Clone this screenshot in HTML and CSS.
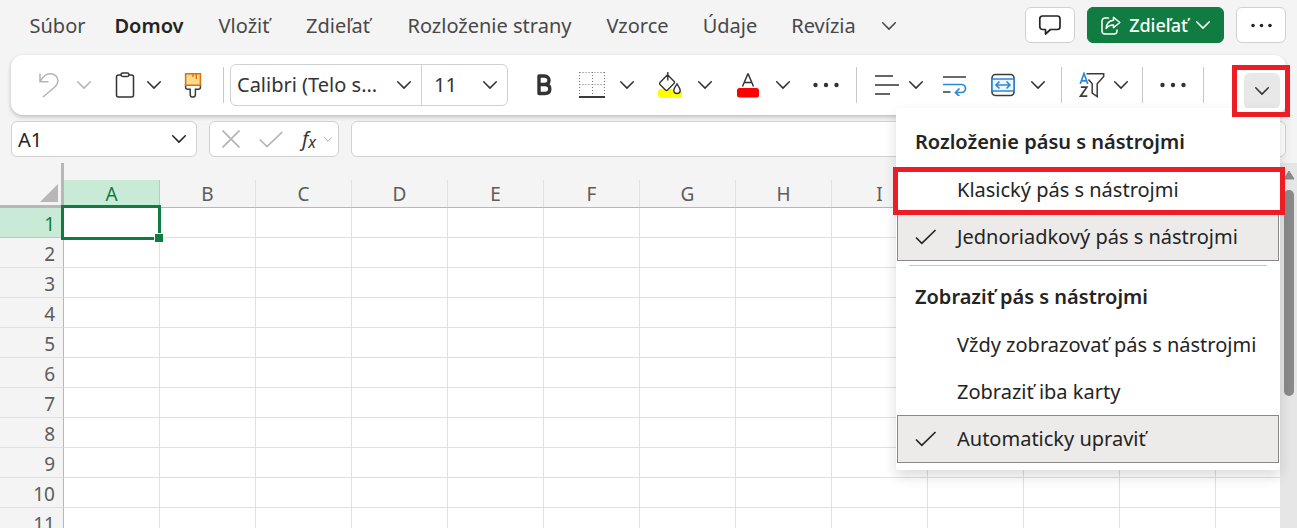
FILE: index.html
```html
<!DOCTYPE html>
<html lang="sk">
<head>
<meta charset="utf-8">
<title>Excel</title>
<link rel="stylesheet" href="styles.css">
</head>
<body>
<svg class="defs" aria-hidden="true">
  <symbol id="chev" viewBox="0 0 14 8"><path d="M.7.8 7 7.1 13.3.8" fill="none" stroke="currentColor" stroke-width="1.5" stroke-linecap="round" stroke-linejoin="round"/></symbol>
  <symbol id="dots" viewBox="0 0 26 6"><g fill="currentColor"><circle cx="2.5" cy="3" r="2.2"/><circle cx="13" cy="3" r="2.2"/><circle cx="23.500" cy="3" r="2.2"/></g></symbol>
  <symbol id="tick" viewBox="0 0 22 16"><path d="M1 8.500 6.800 14.300 20.500 1" fill="none" stroke="currentColor" stroke-width="1.700"/></symbol>
</svg>

<header class="topbar">
  <nav class="tabs">
    <button class="tab">Súbor</button>
    <button class="tab tab-active">Domov</button>
    <button class="tab">Vložiť</button>
    <button class="tab">Zdieľať</button>
    <button class="tab">Rozloženie strany</button>
    <button class="tab">Vzorce</button>
    <button class="tab">Údaje</button>
    <button class="tab">Revízia</button>
    <button class="tab" aria-label="Ďalšie karty"><svg class="chev"><use href="#chev"/></svg></button>
  </nav>
  <div class="actions">
    <button class="action" aria-label="Komentáre">
      <svg width="24" height="22" viewBox="0 0 24 22" fill="none" stroke="currentColor" stroke-width="1.7" stroke-linejoin="round"><path d="M4.500 2h14.800a2.700 2.700 0 0 1 2.700 2.700v8.100a2.700 2.700 0 0 1-2.700 2.700h-6.800L7.500 20v-4.500h-3a2.700 2.700 0 0 1-2.700-2.700V4.700A2.700 2.700 0 0 1 4.500 2z"/></svg>
    </button>
    <button class="action share">
      <svg width="20" height="19" viewBox="0 0 20 19" fill="none" stroke="currentColor" stroke-width="1.500" stroke-linejoin="round" stroke-linecap="round"><path d="M7.500 2H4a3 3 0 0 0-3 3v10a3 3 0 0 0 3 3h9a3 3 0 0 0 3-3v-1"/><path d="M12.500 1.200 18.800 6.500l-6.300 5.300V8.900c-3.500-.1-5.500 1-7.300 3.600.3-4.400 2.700-7.800 7.300-8.200z"/></svg>
      <span>Zdieľať</span>
      <svg class="chev"><use href="#chev"/></svg>
    </button>
    <button class="action" aria-label="Viac"><svg width="21" height="5"><use href="#dots"/></svg></button>
  </div>
</header>

<section class="ribbon" aria-label="Pás s nástrojmi">
  <button class="tool muted" aria-label="Späť"><svg width="22" height="26" viewBox="0 0 22 26" fill="none" stroke="currentColor" stroke-width="1.500"><path d="M2 1.500v8.200h8.500M2.300 9.400C4.500 5 8 2 12 1.800c4.500-.2 8 3 8 6.700 0 3-1.300 4.600-3.500 6.800L5 25"/></svg></button>
  <button class="drop muted" aria-label="Možnosti späť"><svg class="chev"><use href="#chev"/></svg></button>

  <button class="tool narrow gap-12" aria-label="Prilepiť"><svg width="20" height="26" viewBox="0 0 20 26" fill="none" stroke="currentColor" stroke-width="1.500"><rect x="1.500" y="3" width="17" height="22" rx="2"/><rect x="6" y="1" width="8" height="3.500" rx="1.700" fill="#fff"/></svg></button>
  <button class="drop" aria-label="Možnosti prilepenia"><svg class="chev"><use href="#chev"/></svg></button>
  <button class="tool gap-4" aria-label="Kopírovať formát"><svg width="18" height="26" viewBox="0 0 18 26" fill="none"><path d="M1.600 12v3.300a2 2 0 0 0 2 2H6.200v5.200a2.600 2.600 0 0 0 5.200 0v-5.200H14.400a2 2 0 0 0 2-2V12" stroke="#3b3b3b" stroke-width="1.500"/><path d="M1.600 1.700h14.800v11.600H1.600z" fill="#f8db8f" stroke="#e07000" stroke-width="1.500"/><path d="M9 2v3M12.300 2v5" stroke="#e07000" stroke-width="1.400"/></svg></button>

  <span class="sep gap-10"></span>

  <div class="fields gap-6">
    <div class="field field-font">
      <select aria-label="Písmo"><option>Calibri (Telo s...</option></select>
      <svg class="chev"><use href="#chev"/></svg>
    </div>
    <div class="field field-size">
      <select aria-label="Veľkosť písma"><option>11</option></select>
      <svg class="chev"><use href="#chev"/></svg>
    </div>
  </div>

  <button class="tool gap-16" aria-label="Tučné"><svg width="16" height="22" viewBox="0 0 16 22" fill="none" stroke="currentColor" stroke-width="3.400" stroke-linejoin="round"><path d="M3 2h5.300c3 0 4.700 1.700 4.700 4.300S11.300 10.500 8.300 10.500H3zM3 10.500h5.800c3.200 0 5 1.700 5 4.500s-1.800 4.500-5 4.500H3z"/></svg></button>
  <button class="tool gap-8" aria-label="Orámovanie"><svg width="26" height="28" viewBox="0 0 26 28" fill="none" stroke="#777" stroke-width="1" stroke-dasharray="1 2"><path d="M.5 1.500h25M.5 13.500h25M.5 1v24M13.500 1v24M25.500 1v24"/><path d="M0 26h26" stroke="#3b3b3b" stroke-width="2" stroke-dasharray="none"/></svg></button>
  <button class="drop" aria-label="Typy orámovania"><svg class="chev"><use href="#chev"/></svg></button>
  <button class="tool gap-8" aria-label="Farba výplne"><svg width="26" height="28" viewBox="0 0 26 28" fill="none" stroke="currentColor" stroke-width="1.400"><rect x="1" y="18" width="24" height="9" rx="3" fill="#ff0" stroke="none"/><path d="M10.300 4 3 11.500a1.400 1.400 0 0 0 0 2l5.500 5.600a1.400 1.400 0 0 0 2 0L17 12.500c.9-.9.900-1.300.2-2.100L10.800 4M10.800 1v8.500" fill="#fff"/><path d="M20 13c1.500 2.200 3.200 4.200 3.200 6.300a3.200 3.200 0 0 1-6.400 0c0-2.100 1.700-4.100 3.200-6.300z" fill="#fff"/></svg></button>
  <button class="drop" aria-label="Farby výplne"><svg class="chev"><use href="#chev"/></svg></button>
  <button class="tool gap-8" aria-label="Farba písma"><svg width="22" height="26" viewBox="0 0 22 26" fill="none" stroke="currentColor" stroke-width="1.500"><path d="M5.500 14.500 10.800 2h.4l5.300 12.500M7.300 10.500h7.400"/><rect y="16" width="22" height="9.500" rx="2.500" fill="red" stroke="none"/></svg></button>
  <button class="drop" aria-label="Farby písma"><svg class="chev"><use href="#chev"/></svg></button>
  <button class="tool gap-8" aria-label="Viac možností písma"><svg width="26" height="6"><use href="#dots"/></svg></button>

  <span class="sep gap-10"></span>

  <button class="tool narrow gap-16" aria-label="Zarovnanie"><svg width="24" height="22" viewBox="0 0 24 22" stroke="currentColor" stroke-width="1.600"><path d="M0 2h18M0 11h24M0 20h15"/></svg></button>
  <button class="drop" aria-label="Možnosti zarovnania"><svg class="chev"><use href="#chev"/></svg></button>
  <button class="tool gap-4" aria-label="Zalomiť text"><svg width="26" height="22" viewBox="0 0 26 22" fill="none" stroke="#3b3b3b" stroke-width="1.700"><path d="M1 3h23M1 18h7.500"/><path d="M1 10.500h18.500a3.700 3.700 0 0 1 0 8H13.500M17.500 14.500l-4 4 4 4" stroke="#2b88d8"/></svg></button>
  <button class="tool gap-8" aria-label="Zlúčiť a centrovať"><svg width="24" height="24" viewBox="0 0 24 24" fill="none" stroke="#3b3b3b" stroke-width="1.600"><rect x="1" y="1.500" width="22" height="21" rx="3.500"/><path d="M1 6h22v12H1z" fill="#eef6fc" stroke="#2b88d8"/><path d="M5 12h14M8.500 8.500 5 12l3.500 3.500M15.500 8.500 19 12l-3.500 3.500" stroke="#2b88d8"/></svg></button>
  <button class="drop" aria-label="Možnosti zlúčenia"><svg class="chev"><use href="#chev"/></svg></button>

  <span class="sep gap-8"></span>

  <button class="tool narrow gap-16" aria-label="Zoradiť a filtrovať"><svg width="26" height="26" viewBox="0 0 26 26" fill="none" stroke="#3b3b3b" stroke-width="1.500"><path d="M1.200 12 5 1.500 8.800 12M2.300 8.800h5.400" stroke="#2b88d8" stroke-width="1.700"/><path d="M1.800 15.200h6L1.500 24.200h6.800" stroke-width="1.700"/><path d="M7.500 1.800h17.200v2.600l-6.500 7.300V24.500l-5-3.500v-9.300L9.500 7.500"/></svg></button>
  <button class="drop" aria-label="Možnosti zoradenia"><svg class="chev"><use href="#chev"/></svg></button>

  <span class="sep gap-6"></span>
  <button class="tool gap-10" aria-label="Ďalšie príkazy"><svg width="26" height="6"><use href="#dots"/></svg></button>
  <span class="sep gap-10"></span>

  <button class="expand" aria-label="Možnosti pása s nástrojmi" aria-expanded="true"><svg class="chev"><use href="#chev"/></svg></button>

  <div class="menu" role="menu">
    <h2>Rozloženie pásu s nástrojmi</h2>
    <button class="item marked" role="menuitemradio" aria-checked="false">Klasický pás s nástrojmi</button>
    <button class="item checked" role="menuitemradio" aria-checked="true"><svg width="22" height="16"><use href="#tick"/></svg>Jednoriadkový pás s nástrojmi</button>
    <hr>
    <h2>Zobraziť pás s nástrojmi</h2>
    <button class="item" role="menuitemradio" aria-checked="false">Vždy zobrazovať pás s nástrojmi</button>
    <button class="item" role="menuitemradio" aria-checked="false">Zobraziť iba karty</button>
    <button class="item checked" role="menuitemradio" aria-checked="true"><svg width="22" height="16"><use href="#tick"/></svg>Automaticky upraviť</button>
  </div>
</section>

<div class="formula-row">
  <div class="namebox">
    <input type="text" value="A1" aria-label="Pole názvov">
    <button aria-label="Zoznam názvov"><svg class="chev"><use href="#chev"/></svg></button>
  </div>
  <div class="entry">
    <button aria-label="Zrušiť"><svg width="18" height="18" viewBox="0 0 18 18" stroke="#b5b5b5" stroke-width="1.700"><path d="M.5.5l17 17M17.500.5l-17 17"/></svg></button>
    <button aria-label="Zadať"><svg width="24" height="17" viewBox="0 0 24 17" fill="none" stroke="#b5b5b5" stroke-width="1.700"><path d="M.8 8.500 8 15.500 23.300 1"/></svg></button>
    <button class="fx" aria-label="Vložiť funkciu"><i>f</i><i class="fx-x">x</i><svg width="8" height="5"><use href="#chev"/></svg></button>
  </div>
  <input class="formula" type="text" aria-label="Riadok vzorcov">
</div>

<main class="sheet">
  <div class="cells">
    <table>
      <colgroup><col class="col-head"><col span="13" class="col-data"></colgroup>
      <thead><tr>
        <th class="corner"><svg width="18" height="18" viewBox="0 0 18 18"><path d="M18 0v18H0z" fill="#b7b7b7"/></svg></th>
        <th class="current"><span>A</span></th><th><span>B</span></th><th><span>C</span></th><th><span>D</span></th><th><span>E</span></th><th><span>F</span></th><th><span>G</span></th><th><span>H</span></th><th><span>I</span></th><th><span></span></th><th><span></span></th><th><span></span></th><th><span></span></th>
      </tr></thead>
      <tbody>
        <tr><th class="current">1</th><td class="selected"></td><td></td><td></td><td></td><td></td><td></td><td></td><td></td><td></td><td></td><td></td><td></td><td></td></tr>
        <tr><th>2</th><td></td><td></td><td></td><td></td><td></td><td></td><td></td><td></td><td></td><td></td><td></td><td></td><td></td></tr>
        <tr><th>3</th><td></td><td></td><td></td><td></td><td></td><td></td><td></td><td></td><td></td><td></td><td></td><td></td><td></td></tr>
        <tr><th>4</th><td></td><td></td><td></td><td></td><td></td><td></td><td></td><td></td><td></td><td></td><td></td><td></td><td></td></tr>
        <tr><th>5</th><td></td><td></td><td></td><td></td><td></td><td></td><td></td><td></td><td></td><td></td><td></td><td></td><td></td></tr>
        <tr><th>6</th><td></td><td></td><td></td><td></td><td></td><td></td><td></td><td></td><td></td><td></td><td></td><td></td><td></td></tr>
        <tr><th>7</th><td></td><td></td><td></td><td></td><td></td><td></td><td></td><td></td><td></td><td></td><td></td><td></td><td></td></tr>
        <tr><th>8</th><td></td><td></td><td></td><td></td><td></td><td></td><td></td><td></td><td></td><td></td><td></td><td></td><td></td></tr>
        <tr><th>9</th><td></td><td></td><td></td><td></td><td></td><td></td><td></td><td></td><td></td><td></td><td></td><td></td><td></td></tr>
        <tr><th>10</th><td></td><td></td><td></td><td></td><td></td><td></td><td></td><td></td><td></td><td></td><td></td><td></td><td></td></tr>
        <tr><th>11</th><td></td><td></td><td></td><td></td><td></td><td></td><td></td><td></td><td></td><td></td><td></td><td></td><td></td></tr>
      </tbody>
    </table>
  </div>
  <div class="scrollbar">
    <svg width="12" height="10" viewBox="0 0 12 10"><path d="M6 1 11 9H1z" fill="#8a8a8a" stroke="#8a8a8a" stroke-linejoin="round"/></svg>
    <div class="thumb"></div>
  </div>
</main>
</body>
</html>
```
FILE: styles.css
```css
* { box-sizing: border-box; }

body {
  margin: 0;
  height: 100vh;
  display: flex;
  flex-direction: column;
  overflow: hidden;
  background: #f4f4f4;
  color: #242424;
  font: 20px/28px "Noto Sans", "Open Sans", sans-serif;
}

button, input, select {
  margin: 0;
  padding: 0;
  border: 0;
  background: none;
  color: inherit;
  font: inherit;
}

.defs { position: absolute; width: 0; height: 0; }
svg { display: block; flex: none; }
.chev { width: 14px; height: 8px; }

/* Tabs and actions */
.topbar {
  flex: none;
  height: 55px;
  padding: 7px 11px 0 15px;
  display: flex;
  justify-content: space-between;
  align-items: flex-start;
}
.tabs {
  display: grid;
  grid-template-columns: 85px 98px 92px 96px 207px 89px 96px 91px 40px;
  height: 38px;
}
.tab {
  display: flex;
  align-items: center;
  justify-content: center;
  color: #484848;
  white-space: nowrap;
}
.tab-active { color: #242424; font-weight: 600; }
.actions { display: flex; gap: 12px; }
.action {
  width: 50px;
  height: 36px;
  display: flex;
  align-items: center;
  justify-content: center;
  background: #fff;
  border: 1px solid #d1d1d1;
  border-radius: 6px;
}
.share {
  width: 137px;
  gap: 8px;
  background: #107c41;
  border-color: #107c41;
  color: #fff;
  font-size: 18px;
  font-weight: 500;
}

/* Ribbon */
.ribbon {
  position: relative;
  z-index: 2;
  flex: none;
  height: 60px;
  margin: 0 11px;
  padding: 0 6px 0 18px;
  display: flex;
  align-items: center;
  background: #fff;
  border-radius: 12px;
  box-shadow: 0 2px 4px rgba(0, 0, 0, .22);
  color: #333;
}
.tool, .drop {
  flex: none;
  height: 36px;
  display: flex;
  align-items: center;
  justify-content: center;
}
.tool { width: 40px; }
.narrow { width: 28px; }
.drop { width: 30px; }
.muted { color: #b5b5b5; }
.gap-4 { margin-left: 4px; }
.gap-6 { margin-left: 6px; }
.gap-8 { margin-left: 8px; }
.gap-10 { margin-left: 10px; }
.gap-12 { margin-left: 12px; }
.gap-16 { margin-left: 16px; }
.sep { flex: none; width: 1px; height: 36px; background: #c8c8c8; }
.fields {
  flex: none;
  display: flex;
  height: 42px;
  border: 1px solid #d1d1d1;
  border-radius: 6px;
}
.field { display: grid; align-items: center; }
.field > * { grid-area: 1 / 1; }
.field select {
  width: 100%;
  height: 40px;
  appearance: none;
}
.field .chev { justify-self: end; margin-right: 10px; pointer-events: none; }
.field-font { width: 190px; }
.field-font select { padding-left: 6px; }
.field-size { width: 86px; border-left: 1px solid #d1d1d1; }
.field-size select { padding-left: 12px; }
.expand {
  position: relative;
  flex: none;
  width: 36px;
  height: 36px;
  margin: 12px 0 0 auto;
  display: grid;
  place-items: center;
  background: #e8e8e8;
  border-radius: 6px;
}
.expand::after {
  content: "";
  position: absolute;
  inset: -8px -10px -8px -12px;
  border: 5px solid #ee1c24;
  z-index: 1;
}

/* Drop-down menu */
.menu {
  position: absolute;
  top: 53px;
  right: 6px;
  width: 384px;
  padding: 10px 1px 7px;
  background: #fff;
  border-radius: 3px;
  box-shadow: 0 6px 14px rgba(0, 0, 0, .14);
  color: #242424;
}
.menu h2 {
  margin: 0;
  padding-left: 18px;
  font-size: 20px;
  font-weight: 600;
  line-height: 48px;
}
.item {
  position: relative;
  width: 100%;
  height: 47px;
  padding-left: 60px;
  display: flex;
  align-items: center;
  white-space: nowrap;
}
.checked {
  height: 48px;
  padding-left: 17px;
  gap: 20px;
  background: #edebe9;
  border: 1px solid #8a8886;
}
.marked::after {
  content: "";
  position: absolute;
  inset: 1px -6px -2px -4px;
  border: 5px solid #ee1c24;
  z-index: 1;
}
.menu hr {
  height: 1px;
  margin: 4px 12px 7px;
  border: 0;
  background: #c8c6c4;
}

/* Name box and formula bar */
.formula-row {
  flex: none;
  height: 48px;
  padding: 6px 11px;
  display: flex;
  gap: 12px;
}
.namebox, .entry, .formula {
  height: 36px;
  background: #fff;
  border: 1px solid #d1d1d1;
  border-radius: 6px;
}
.namebox { flex: none; width: 186px; display: flex; }
.namebox input { flex: 1; min-width: 0; padding: 2px 0 0 6px; }
.namebox button { width: 34px; display: grid; place-items: center; }
.entry {
  flex: none;
  width: 130px;
  padding: 0 6px 0 12px;
  display: flex;
  align-items: center;
  justify-content: space-between;
}
.fx { display: flex; align-items: center; color: #333; }
.fx-x { font-size: 16px; padding-top: 6px; }
.fx svg { margin-left: 8px; color: #999; }
.formula { flex: 1; min-width: 0; padding: 0 8px; }

/* Sheet */
.sheet { flex: 1; min-height: 0; display: flex; }
.cells { flex: 1; min-width: 0; overflow: hidden; background: #fff; }
table {
  width: 1312px;
  table-layout: fixed;
  border-collapse: separate;
  border-spacing: 0;
  font-size: 19px;
  color: #5c5c5c;
}
.col-head { width: 64px; }
.col-data { width: 96px; }
th, td { padding: 0; font-weight: 400; height: 30px; }
td { border-right: 1px solid #e0e0e0; border-bottom: 1px solid #e0e0e0; }
thead th {
  height: 45px;
  vertical-align: bottom;
  background: #f4f4f4;
  border-bottom: 1px solid #b7b7b7;
}
thead span {
  display: block;
  height: 27px;
  line-height: 28px;
  border-right: 1px solid #e0e0e0;
}
thead .corner { border-right: 3px solid #b7b7b7; border-bottom: 3px solid #b7b7b7; }
.corner svg { margin: 0 3px 3px auto; }
tbody th {
  padding: 3px 8px 0 0;
  text-align: right;
  line-height: 26px;
  background: #f4f4f4;
  border-right: 1px solid #b7b7b7;
  border-bottom: 1px solid #e0e0e0;
}
thead .current span { background: #caead8; color: #107c41; border-color: #a0d8b9; }
tbody .current { background: #caead8; color: #107c41; border-bottom-color: #a0d8b9; }
.selected { position: relative; }
.selected::before {
  content: "";
  position: absolute;
  inset: -3px -2px -3px -3px;
  border: 3px solid #107c41;
}
.selected::after {
  content: "";
  position: absolute;
  right: -5px;
  bottom: -6px;
  width: 8px;
  height: 8px;
  background: #107c41;
  border: 1px solid #fff;
}
.scrollbar {
  flex: none;
  width: 17px;
  padding-top: 7px;
  display: flex;
  flex-direction: column;
  align-items: center;
  gap: 10px;
  background: #e6e6e6;
}
.thumb { width: 10px; height: 206px; border-radius: 5px; background: #8a8a8a; }
```
